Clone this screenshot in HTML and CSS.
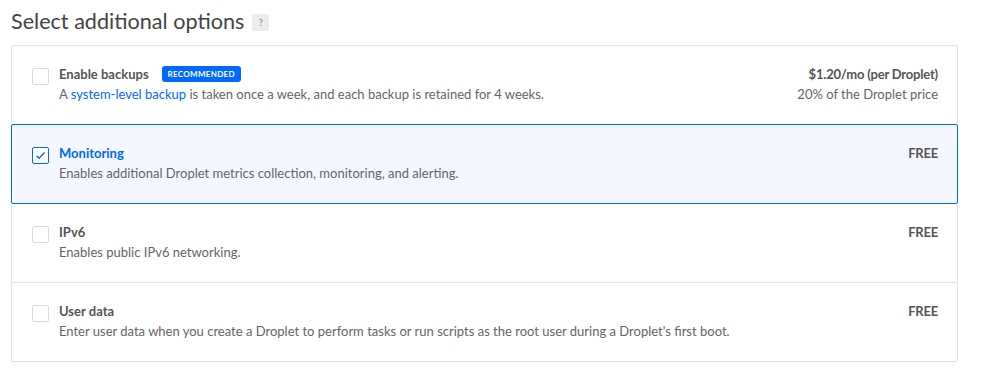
FILE: index.html
```html
<!DOCTYPE html>
<html lang="en">
<head>
  <meta charset="UTF-8" />
  <title>Select additional options</title>
  <link rel="stylesheet" href="styles.css">
</head>
<body>
  <div class="options">
    <h2 class="heading">Select additional options <span class="help">?</span></h2>

    <div class="list">
      <label class="option">
        <span class="check"></span>
        <div class="info">
          <div class="title">Enable backups <span class="badge">RECOMMENDED</span></div>
          <div class="desc">A <a href="#">system-level backup</a> is taken once a week, and each backup is retained for 4 weeks.</div>
        </div>
        <div class="price">
          <div class="amount">$1.20/mo (per Droplet)</div>
          <div class="note">20% of the Droplet price</div>
        </div>
      </label>

      <label class="option selected">
        <span class="check">
          <svg width="11" height="9" viewBox="0 0 11 9"><path d="M1.5 4.8 L4.2 7.3 L9.5 1.5" fill="none" stroke="#0069ff" stroke-width="1.3" /></svg>
        </span>
        <div class="info">
          <div class="title">Monitoring</div>
          <div class="desc">Enables additional Droplet metrics collection, monitoring, and alerting.</div>
        </div>
        <div class="price">
          <div class="amount free">FREE</div>
        </div>
      </label>

      <label class="option">
        <span class="check"></span>
        <div class="info">
          <div class="title">IPv6</div>
          <div class="desc">Enables public IPv6 networking.</div>
        </div>
        <div class="price">
          <div class="amount free">FREE</div>
        </div>
      </label>

      <label class="option">
        <span class="check"></span>
        <div class="info">
          <div class="title">User data</div>
          <div class="desc">Enter user data when you create a Droplet to perform tasks or run scripts as the root user during a Droplet's first boot.</div>
        </div>
        <div class="price">
          <div class="amount free">FREE</div>
        </div>
      </label>
    </div>
  </div>
</body>
</html>
```

FILE: styles.css
```css
* {
  box-sizing: border-box;
  margin: 0;
  padding: 0;
}

body {
  font-family: 'Lato', 'Open Sans', sans-serif;
  background-color: #fff;
  color: #666;
}

.options {
  width: 958px;
  padding: 8px 0 0 11px;
}

.heading {
  font-size: 21.6px;
  font-weight: 400;
  line-height: 26px;
  color: #444;
  display: flex;
  align-items: center;
  gap: 8px;
}

.help {
  display: inline-flex;
  align-items: center;
  justify-content: center;
  width: 17px;
  height: 17px;
  margin-top: 3px;
  background-color: #ececec;
  color: #999;
  font-size: 9px;
  font-weight: 700;
  border-radius: 2px;
}

.list {
  margin-top: 11px;
}

.option {
  position: relative;
  display: flex;
  align-items: flex-start;
  height: 80px;
  margin-top: -1px;
  padding: 18px 19px 20px 20px;
  border: 1px solid #e2e2e2;
  border-radius: 2px;
  background-color: #fff;
  cursor: pointer;
}

.option:first-child {
  margin-top: 0;
}

.option.selected {
  z-index: 1;
  border-color: #0069ff;
  background-color: #f4f7fe;
}

.check {
  flex: none;
  display: flex;
  align-items: center;
  justify-content: center;
  width: 17px;
  height: 17px;
  margin-top: 4px;
  margin-right: 10px;
  background-color: #fff;
  border: 1px solid #dcdcdc;
  border-radius: 2px;
}

.selected .check {
  border-color: #0069ff;
}

.info {
  flex: 1;
  font-size: 13px;
  line-height: 20px;
}

.title {
  display: flex;
  align-items: center;
  gap: 13px;
  font-weight: 700;
  color: #555;
}

.selected .title {
  color: #0069ff;
}

.badge {
  display: inline-block;
  height: 16px;
  padding: 0 6px;
  line-height: 16px;
  background-color: #0069ff;
  color: #fff;
  font-size: 8px;
  font-weight: 700;
  letter-spacing: 0.3px;
  border-radius: 3px;
}

.desc {
  color: #666;
}

.desc a {
  color: #0069ff;
  text-decoration: none;
}

.price {
  text-align: right;
  font-size: 13px;
  line-height: 20px;
}

.amount {
  font-weight: 700;
  color: #555;
  letter-spacing: -0.2px;
}

.note {
  color: #666;
}
```
